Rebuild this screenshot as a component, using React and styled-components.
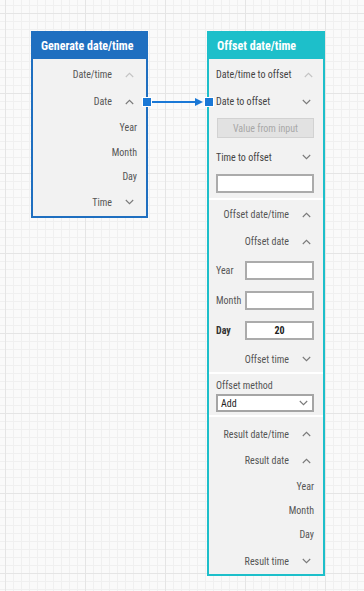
import styled, { createGlobalStyle } from "styled-components";

const GlobalStyle = createGlobalStyle`
  html, body, #root {
    margin: 0;
    padding: 0;
    height: 100%;
  }
  body {
    font-family: "Liberation Sans Narrow", "Roboto Condensed", Roboto, sans-serif;
  }
`;

const BLUE = "#1f6fc0";
const TEAL = "#1dbfca";
const PORT = "#1a78d6";

const Canvas = styled.div`
  position: relative;
  width: 364px;
  height: 591px;
  overflow: hidden;
  background-color: #fafafa;
  background-image:
    linear-gradient(to right, #e5e5e5 1px, transparent 1px),
    linear-gradient(to bottom, #e5e5e5 1px, transparent 1px),
    linear-gradient(to right, #f0f0f0 1px, transparent 1px),
    linear-gradient(to bottom, #f0f0f0 1px, transparent 1px);
  background-size: 80px 80px, 80px 80px, 8px 8px, 8px 8px;
  background-position: 5px 13px, 5px 13px, 5px 13px, 5px 13px;
`;

const Node = styled.div`
  position: absolute;
  left: ${(p) => p.$x}px;
  top: ${(p) => p.$y}px;
  width: ${(p) => p.$w}px;
  box-sizing: border-box;
  border: 2px solid ${(p) => p.$color};
  background: #f2f2f2;
  display: flex;
  flex-direction: column;
`;

const Header = styled.div`
  height: 26px;
  background: ${(p) => p.$color};
  color: #fff;
  font-size: 12px;
  font-weight: bold;
  display: flex;
  align-items: center;
  margin: -2px -2px 0;
  padding-top: 2px;
  padding-left: 10px;
`;

const Section = styled.div`
  display: flex;
  flex-direction: column;
  padding: ${(p) => p.$pad || "2px 0 0"};
  border-top: ${(p) => (p.$sep ? "2px solid #fff" : "none")};
`;

const Row = styled.div`
  position: relative;
  height: ${(p) => p.$h || 27}px;
  display: flex;
  align-items: center;
  justify-content: ${(p) => (p.$left ? "space-between" : "flex-end")};
  gap: 13px;
  padding: ${(p) => (p.$left ? "0 12px 0 7px" : p.$leaf ? "0 9px 0 0" : "0 12px 0 0")};
  margin-top: ${(p) => p.$mt || 0}px;
  font-size: 10px;
  color: #555;
`;

const Label = styled.span`
  white-space: nowrap;
  color: ${(p) => (p.$bold ? "#333" : p.$dark ? "#444" : "#555")};
  font-weight: ${(p) => (p.$bold ? "bold" : "normal")};
`;

const Port = styled.span`
  position: absolute;
  top: 50%;
  ${(p) => (p.$side === "right" ? "right: -6px;" : "left: -5.5px;")}
  width: 8px;
  height: 8px;
  margin-top: -5px;
  background: ${PORT};
  border: 1px solid #fff;
`;

const ValueButton = styled.div`
  margin: 3px 9px 0 8px;
  height: 20px;
  box-sizing: border-box;
  border: 1px solid #d2d2d2;
  background: #e2e2e2;
  color: #a8a8a8;
  font-size: 10px;
  display: flex;
  align-items: center;
  justify-content: center;
`;

const TextInput = styled.div`
  margin: ${(p) => p.$m || "4px 9px 0 7px"};
  height: 19px;
  width: ${(p) => (p.$w ? `${p.$w}px` : "auto")};
  box-sizing: border-box;
  border: 2px solid #ababab;
  background: #fff;
  color: #222;
  font-size: 10px;
  font-weight: bold;
  display: flex;
  align-items: center;
  justify-content: center;
`;

const FieldRow = styled.div`
  height: 30px;
  display: flex;
  align-items: center;
  justify-content: space-between;
  padding: 0 9px 0 7px;
  font-size: 10px;
  color: #555;
`;

const SmallLabel = styled.div`
  padding: 0 7px;
  height: 12px;
  line-height: 12px;
  font-size: 10px;
  color: #555;
`;

const Select = styled.div`
  margin: 2px 9px 0 7px;
  height: 18px;
  box-sizing: border-box;
  border: 2px solid #a5a5a5;
  background: #fff;
  display: flex;
  align-items: center;
  justify-content: space-between;
  padding: 0 4px 0 3px;
  font-size: 10px;
  color: #222;
`;

const Arrow = styled.svg`
  position: absolute;
  left: 151px;
  top: 97px;
`;

const Chevron = ({ up, light }) => (
  <svg width="9" height="6" viewBox="0 0 9 6" style={{ flex: "none" }}>
    <polyline
      points={up ? "0.8,5 4.5,1.3 8.2,5" : "0.8,1 4.5,4.7 8.2,1"}
      fill="none"
      stroke={light ? "#c4c4c4" : "#7a7a7a"}
      strokeWidth="1.1"
    />
  </svg>
);

const App = () => {
  return (
    <>
      <GlobalStyle />
      <Canvas>
        <Node $x={31} $y={31} $w={117} $color={BLUE}>
          <Header $color={BLUE}>Generate date/time</Header>
          <Section $pad="2px 0 1px">
            <Row>
              <Label>Date/time</Label>
              <Chevron up light />
            </Row>
            <Row>
              <Label>Date</Label>
              <Chevron up />
              <Port $side="right" />
            </Row>
            <Row $leaf $h={25}>
              <Label>Year</Label>
            </Row>
            <Row $leaf $h={24}>
              <Label>Month</Label>
            </Row>
            <Row $leaf $h={25}>
              <Label>Day</Label>
            </Row>
            <Row $h={26}>
              <Label>Time</Label>
              <Chevron />
            </Row>
          </Section>
        </Node>

        <Arrow width="54" height="10" viewBox="0 0 54 10">
          <line x1="1" y1="5" x2="46" y2="5" stroke={PORT} strokeWidth="2" />
          <polygon points="44,1 52,5 44,9" fill={PORT} />
        </Arrow>

        <Node $x={207} $y={31} $w={118} $color={TEAL}>
          <Header $color={TEAL}>Offset date/time</Header>
          <Section $pad="2px 0 5px">
            <Row $left>
              <Label $dark>Date/time to offset</Label>
              <Chevron up light />
            </Row>
            <Row $left>
              <Label $dark>Date to offset</Label>
              <Chevron />
              <Port $side="left" />
            </Row>
            <ValueButton>Value from input</ValueButton>
            <Row $left $mt={6} $h={26}>
              <Label $dark>Time to offset</Label>
              <Chevron />
            </Row>
            <TextInput />
          </Section>

          <Section $sep $pad="1px 0 0">
            <Row>
              <Label>Offset date/time</Label>
              <Chevron up />
            </Row>
            <Row>
              <Label>Offset date</Label>
              <Chevron up />
            </Row>
            <FieldRow>
              <Label>Year</Label>
              <TextInput $m="0" $w={69} />
            </FieldRow>
            <FieldRow>
              <Label>Month</Label>
              <TextInput $m="0" $w={69} />
            </FieldRow>
            <FieldRow>
              <Label $bold>Day</Label>
              <TextInput $m="0" $w={69}>20</TextInput>
            </FieldRow>
            <Row $mt={1} $h={26}>
              <Label>Offset time</Label>
              <Chevron />
            </Row>
          </Section>

          <Section $sep $pad="6px 0 3px">
            <SmallLabel>Offset method</SmallLabel>
            <Select>
              <span>Add</span>
              <Chevron />
            </Select>
          </Section>

          <Section $sep $pad="4px 0 0">
            <Row $h={26}>
              <Label>Result date/time</Label>
              <Chevron up />
            </Row>
            <Row>
              <Label>Result date</Label>
              <Chevron up />
            </Row>
            <Row $leaf $h={24}>
              <Label>Year</Label>
            </Row>
            <Row $leaf $h={24}>
              <Label>Month</Label>
            </Row>
            <Row $leaf $h={25}>
              <Label>Day</Label>
            </Row>
            <Row $mt={1} $h={26}>
              <Label>Result time</Label>
              <Chevron />
            </Row>
          </Section>
        </Node>
      </Canvas>
    </>
  );
};

export default App;
